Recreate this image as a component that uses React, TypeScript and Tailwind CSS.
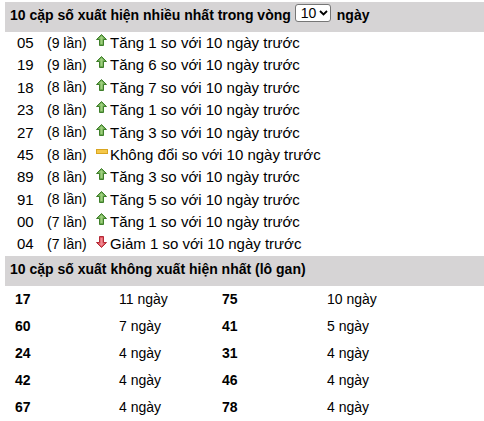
import React from 'react';

type Row = { so: string; lan: number; kind: 'up' | 'down' | 'same'; n: number };

const rows: Row[] = [
  { so: '05', lan: 9, kind: 'up', n: 1 },
  { so: '19', lan: 9, kind: 'up', n: 6 },
  { so: '18', lan: 8, kind: 'up', n: 7 },
  { so: '23', lan: 8, kind: 'up', n: 1 },
  { so: '27', lan: 8, kind: 'up', n: 3 },
  { so: '45', lan: 8, kind: 'same', n: 0 },
  { so: '89', lan: 8, kind: 'up', n: 3 },
  { so: '91', lan: 8, kind: 'up', n: 5 },
  { so: '00', lan: 7, kind: 'up', n: 1 },
  { so: '04', lan: 7, kind: 'down', n: 1 },
];

const gan: [string, string, string, string][] = [
  ['17', '11 ngày', '75', '10 ngày'],
  ['60', '7 ngày', '41', '5 ngày'],
  ['24', '4 ngày', '31', '4 ngày'],
  ['42', '4 ngày', '46', '4 ngày'],
  ['67', '4 ngày', '78', '4 ngày'],
];

const UpIcon = () => (
  <svg width="11" height="12" viewBox="0 0 11 12" className="block">
    <path d="M5.5 0.5 L10.5 5.5 L7.5 5.5 L7.5 11.5 L3.5 11.5 L3.5 5.5 L0.5 5.5 Z" fill="#6aa84f" stroke="#3f7f2a" strokeWidth="1" />
    <path d="M5.5 2 L8 4.5 L6.5 4.5 L6.5 10 L4.5 10 L4.5 4.5 L3 4.5 Z" fill="#9fd07f" />
  </svg>
);

const DownIcon = () => (
  <svg width="11" height="12" viewBox="0 0 11 12" className="block">
    <path d="M3.5 0.5 L7.5 0.5 L7.5 6.5 L10.5 6.5 L5.5 11.5 L0.5 6.5 L3.5 6.5 Z" fill="#e0505c" stroke="#b32a36" strokeWidth="1" />
    <path d="M4.5 2 L6.5 2 L6.5 7.5 L8 7.5 L5.5 10 L3 7.5 L4.5 7.5 Z" fill="#f08a92" />
  </svg>
);

const SameIcon = () => (
  <svg width="12" height="5" viewBox="0 0 12 5" className="block">
    <rect x="0.5" y="0.5" width="11" height="4" fill="#f5c84a" stroke="#d9a520" strokeWidth="1" />
  </svg>
);

export default function App() {
  return (
    <div className="w-[484px] pt-[2px] pl-[5px] text-[14px] text-black font-['Liberation_Sans',Arial,sans-serif]">
      <div className="h-[30px] bg-[#d6d4d5] flex items-start pt-[3px] pl-[5px] font-bold">
        <span>10 cặp số xuất hiện nhiều nhất trong vòng</span>
        <span className="ml-[4px] mr-[6px] mt-[-1px] w-[36px] h-[18px] border border-[#767676] rounded-[3px] bg-white flex items-center pl-[5px] font-normal">
          10
          <svg width="9" height="6" viewBox="0 0 9 6" className="ml-[3px]">
            <path d="M1 1 L4.5 4.5 L8 1" fill="none" stroke="#000" strokeWidth="1.8" />
          </svg>
        </span>
        <span>ngày</span>
      </div>
      <div className="flex flex-col">
        {rows.map((r) => (
          <div key={r.so} className="h-[22.4px] flex items-center">
            <span className="w-[42px] pl-[12px] text-[15px]">{r.so}</span>
            <span className="w-[49px]">({r.lan} lần)</span>
            <span className="w-[14px] h-full flex items-start pt-[2px]">
              {r.kind === 'up' && <UpIcon />}
              {r.kind === 'down' && <DownIcon />}
              {r.kind === 'same' && <span className="mt-[3px]"><SameIcon /></span>}
            </span>
            <span className="text-[15px]">
              {r.kind === 'up' && `Tăng ${r.n} so với 10 ngày trước`}
              {r.kind === 'down' && `Giảm ${r.n} so với 10 ngày trước`}
              {r.kind === 'same' && 'Không đổi so với 10 ngày trước'}
            </span>
          </div>
        ))}
      </div>
      <div className="h-[30px] bg-[#d6d4d5] flex items-start pt-[3px] pl-[5px] font-bold">
        10 cặp số xuất không xuất hiện nhất (lô gan)
      </div>
      <div className="flex flex-col">
        {gan.map((g) => (
          <div key={g[0]} className="h-[27px] grid grid-cols-[104px_103px_105px_1fr] items-center pl-[10px]">
            <span className="font-bold">{g[0]}</span>
            <span>{g[1]}</span>
            <span className="font-bold">{g[2]}</span>
            <span>{g[3]}</span>
          </div>
        ))}
      </div>
    </div>
  );
}
